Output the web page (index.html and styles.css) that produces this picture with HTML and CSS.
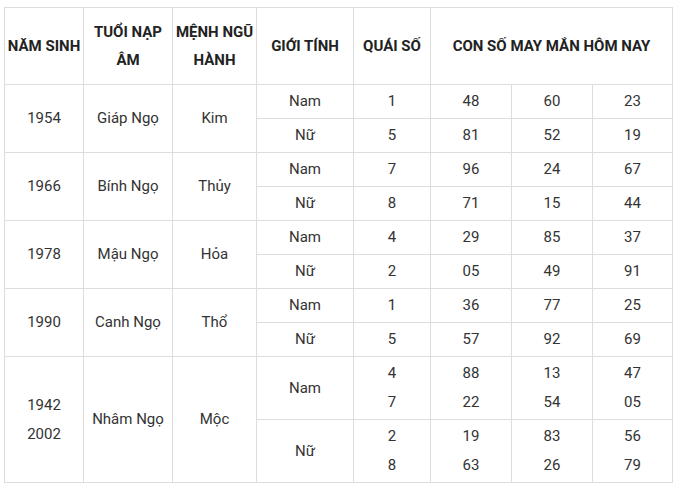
FILE: index.html
```html
<!DOCTYPE html>
<html lang="vi">
<head>
<meta charset="utf-8">
<link rel="stylesheet" href="styles.css">
</head>
<body>
<table class="lucky">
  <colgroup>
    <col class="c1"><col class="c2"><col class="c3"><col class="c4"><col class="c5"><col class="c6"><col class="c7"><col class="c8">
  </colgroup>
  <thead>
    <tr class="head">
      <th>NĂM SINH</th>
      <th>TUỔI NẠP ÂM</th>
      <th>MỆNH NGŨ HÀNH</th>
      <th>GIỚI TÍNH</th>
      <th>QUÁI SỐ</th>
      <th colspan="3">CON SỐ MAY MẮN HÔM NAY</th>
    </tr>
  </thead>
  <tbody>
    <tr class="r"><td rowspan="2">1954</td><td rowspan="2">Giáp Ngọ</td><td rowspan="2">Kim</td><td>Nam</td><td>1</td><td>48</td><td>60</td><td>23</td></tr>
    <tr class="r"><td>Nữ</td><td>5</td><td>81</td><td>52</td><td>19</td></tr>
    <tr class="r"><td rowspan="2">1966</td><td rowspan="2">Bính Ngọ</td><td rowspan="2">Thủy</td><td>Nam</td><td>7</td><td>96</td><td>24</td><td>67</td></tr>
    <tr class="r"><td>Nữ</td><td>8</td><td>71</td><td>15</td><td>44</td></tr>
    <tr class="r"><td rowspan="2">1978</td><td rowspan="2">Mậu Ngọ</td><td rowspan="2">Hỏa</td><td>Nam</td><td>4</td><td>29</td><td>85</td><td>37</td></tr>
    <tr class="r"><td>Nữ</td><td>2</td><td>05</td><td>49</td><td>91</td></tr>
    <tr class="r"><td rowspan="2">1990</td><td rowspan="2">Canh Ngọ</td><td rowspan="2">Thổ</td><td>Nam</td><td>1</td><td>36</td><td>77</td><td>25</td></tr>
    <tr class="r"><td>Nữ</td><td>5</td><td>57</td><td>92</td><td>69</td></tr>
    <tr class="rr"><td rowspan="2">1942<br>2002</td><td rowspan="2">Nhâm Ngọ</td><td rowspan="2">Mộc</td><td>Nam</td><td>4<br>7</td><td>88<br>22</td><td>13<br>54</td><td>47<br>05</td></tr>
    <tr class="rr"><td>Nữ</td><td>2<br>8</td><td>19<br>63</td><td>83<br>26</td><td>56<br>79</td></tr>
  </tbody>
</table>
</body>
</html>
```
FILE: styles.css
```css
html, body {
  margin: 0;
  background: #ffffff;
}
body {
  padding: 7px 0 0 4px;
  font-family: Roboto, "Liberation Sans", sans-serif;
  color: #333333;
}
.lucky {
  border-collapse: collapse;
  table-layout: fixed;
  width: 669px;
  font-size: 15px;
}
.c1 { width: 79px; }
.c2 { width: 89px; }
.c3 { width: 84px; }
.c4 { width: 97px; }
.c5 { width: 77px; }
.c6 { width: 81px; }
.c7 { width: 81px; }
.c8 { width: 80px; }
.lucky th,
.lucky td {
  border: 1px solid #dddddd;
  padding: 0;
  text-align: center;
  vertical-align: middle;
}
.lucky th {
  font-weight: 700;
  line-height: 28px;
  color: #222222;
}
.lucky td {
  line-height: 29px;
  font-weight: 400;
  color: #333333;
}
.head { height: 77px; }
.r { height: 34px; }
.rr { height: 63px; }
```
